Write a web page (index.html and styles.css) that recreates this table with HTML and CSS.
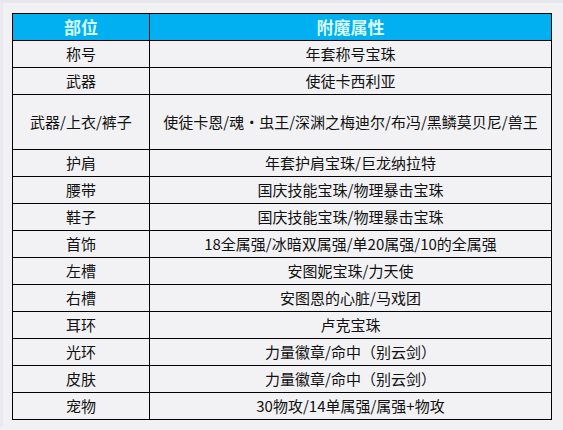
FILE: index.html
```html
<!DOCTYPE html>
<html lang="zh">
<head>
<meta charset="utf-8">
<link rel="stylesheet" href="styles.css">
</head>
<body>
<div class="frame">
<table class="enchant">
  <colgroup><col class="c1"><col class="c2"></colgroup>
  <thead>
    <tr><th>部位</th><th>附魔属性</th></tr>
  </thead>
  <tbody>
    <tr><td>称号</td><td>年套称号宝珠</td></tr>
    <tr><td>武器</td><td>使徒卡西利亚</td></tr>
    <tr class="tall"><td>武器/上衣/裤子</td><td>使徒卡恩/魂・虫王/深渊之梅迪尔/布冯/黑鳞莫贝尼/兽王</td></tr>
    <tr><td>护肩</td><td>年套护肩宝珠/巨龙纳拉特</td></tr>
    <tr><td>腰带</td><td>国庆技能宝珠/物理暴击宝珠</td></tr>
    <tr><td>鞋子</td><td>国庆技能宝珠/物理暴击宝珠</td></tr>
    <tr><td>首饰</td><td>18全属强/冰暗双属强/单20属强/10的全属强</td></tr>
    <tr><td>左槽</td><td>安图妮宝珠/力天使</td></tr>
    <tr><td>右槽</td><td>安图恩的心脏/马戏团</td></tr>
    <tr><td>耳环</td><td>卢克宝珠</td></tr>
    <tr><td>光环</td><td>力量徽章/命中（别云剑）</td></tr>
    <tr><td>皮肤</td><td>力量徽章/命中（别云剑）</td></tr>
    <tr><td>宠物</td><td>30物攻/14单属强/属强+物攻</td></tr>
  </tbody>
</table>
</div>
</body>
</html>
```

FILE: styles.css
```css
html, body {
  margin: 0;
  padding: 0;
  background: #f1f1f4;
}
body {
  border-top: 3px solid #e6e6ec;
  border-left: 3px solid #e9e9ef;
  min-height: 427px;
  box-sizing: border-box;
}
.frame {
  padding: 10px 0 0 9px;
}
.enchant {
  border-collapse: collapse;
  table-layout: fixed;
  width: 539px;
  font-family: "Noto Sans CJK SC", "Noto Sans", sans-serif;
  font-size: 15px;
  color: #111;
  background: #f2f2f4;
}
.c1 { width: 137px; }
.c2 { width: 402px; }
.enchant th,
.enchant td {
  border: 1px solid #000;
  padding: 0;
  height: 26px;
  text-align: center;
  vertical-align: middle;
  line-height: 18px;
  white-space: nowrap;
}
.enchant th {
  background: #00b0f0;
  color: #d8fbff;
  font-size: 17px;
  font-weight: bold;
}
.enchant .tall td {
  height: 54px;
}
```
